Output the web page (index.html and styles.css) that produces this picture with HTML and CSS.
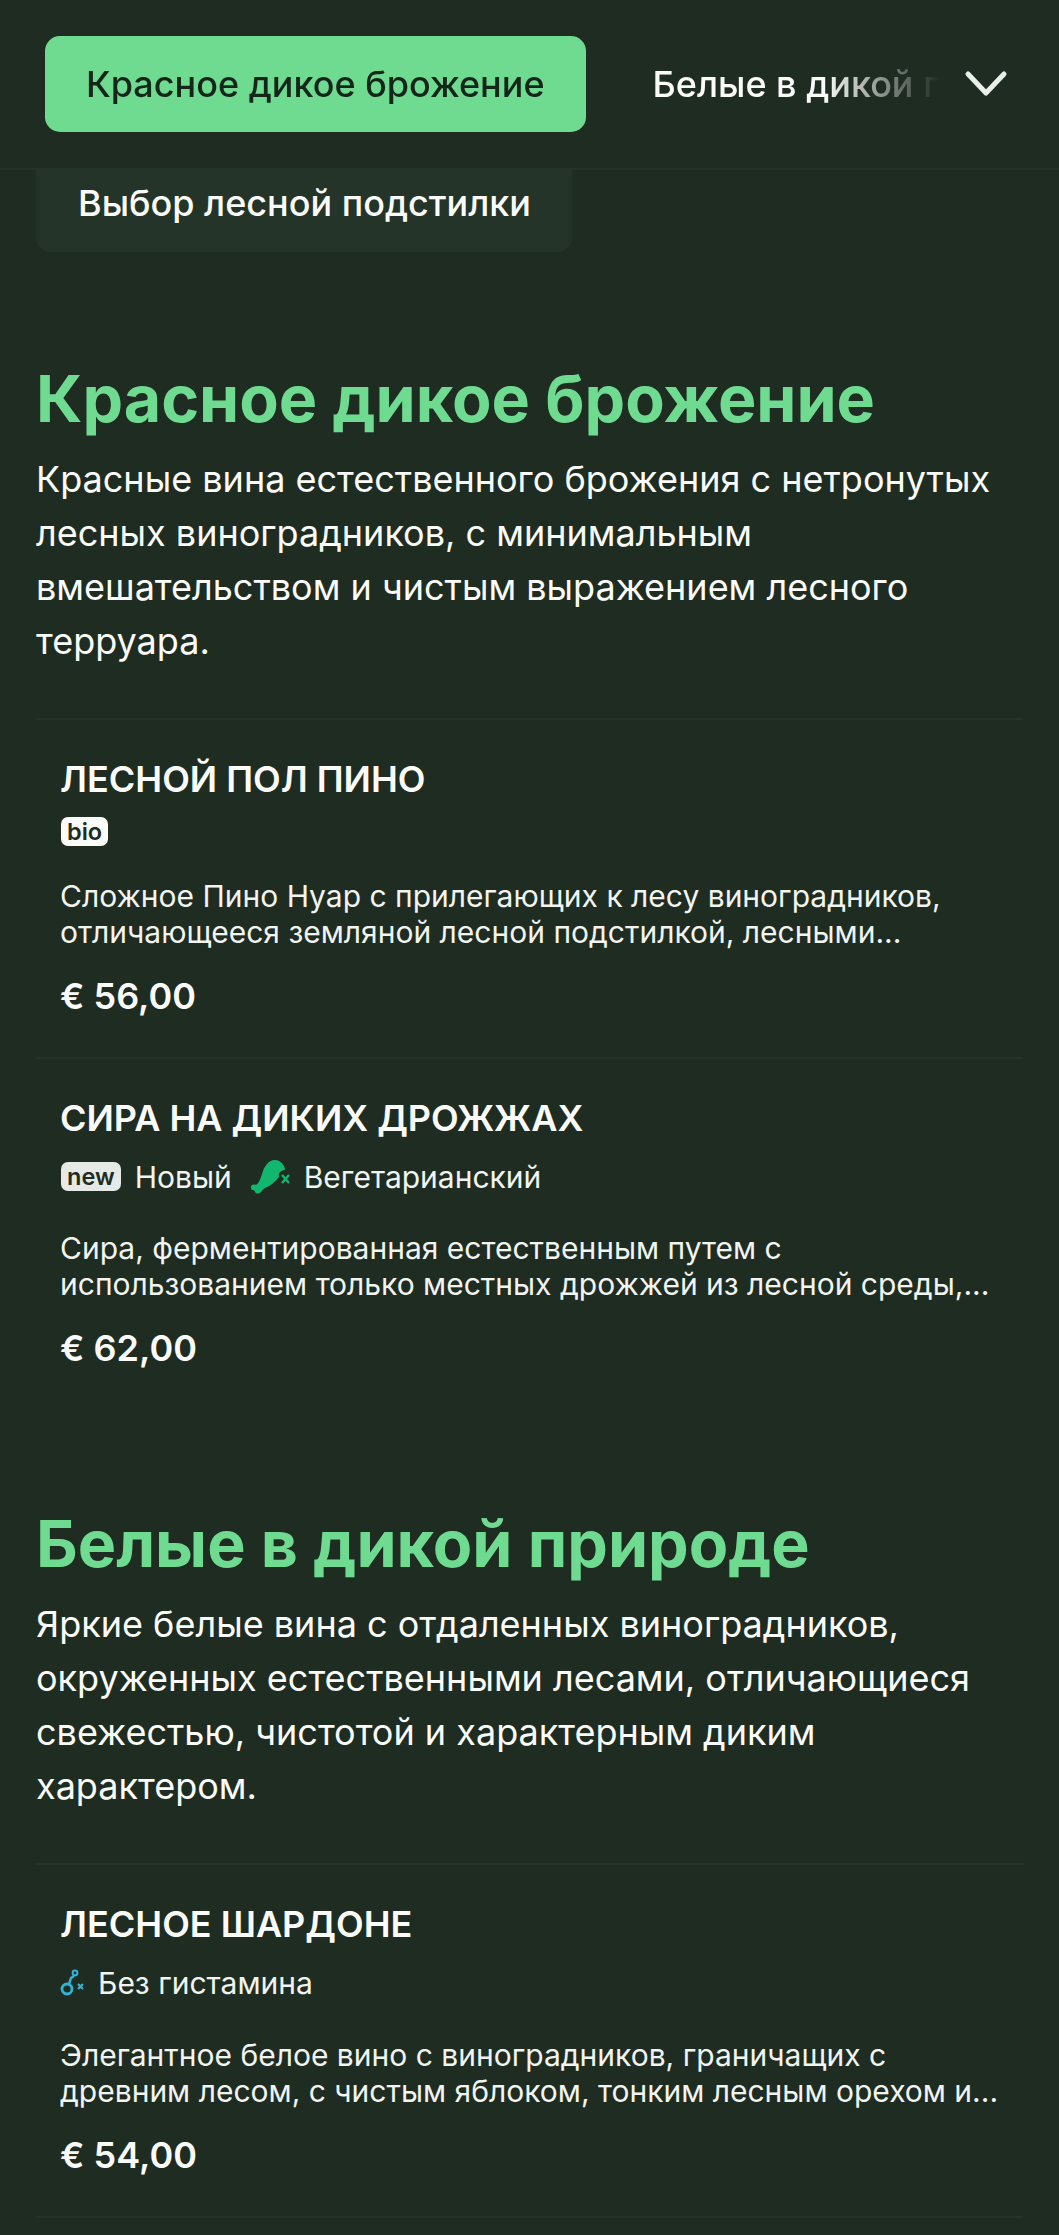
FILE: index.html
```html
<!DOCTYPE html>
<html lang="ru">
<head>
  <meta charset="UTF-8">
  <title>Меню</title>
  <link rel="stylesheet" href="styles.css">
</head>
<body>

  <header class="topbar">
    <nav class="tabs">
      <a class="tab tab-active">Красное дикое брожение</a>
      <a class="tab">Белые в дикой природе</a>
    </nav>
    <button class="tabs-toggle" aria-label="Все категории">
      <svg viewBox="0 0 44 28" width="44" height="28"><path d="M4 4 L22 23 L40 4" fill="none" stroke="#e9efe9" stroke-width="5" stroke-linecap="round" stroke-linejoin="round"/></svg>
    </button>
  </header>

  <main class="menu">
    <div class="prev-tab">Выбор лесной подстилки</div>

    <section class="category">
      <h2>Красное дикое брожение</h2>
      <p class="category-text">Красные вина естественного брожения с нетронутых лесных виноградников, с минимальным вмешательством и чистым выражением лесного терруара.</p>

      <article class="item">
        <h3>ЛЕСНОЙ ПОЛ ПИНО</h3>
        <div class="tags">
          <span class="badge">bio</span>
        </div>
        <p class="item-text">Сложное Пино Нуар с прилегающих к лесу виноградников, отличающееся земляной лесной подстилкой, лесными...</p>
        <div class="price">€ 56,00</div>
      </article>

      <article class="item">
        <h3>СИРА НА ДИКИХ ДРОЖЖАХ</h3>
        <div class="tags">
          <span class="badge badge-soft">new</span>
          <span class="tag-label">Новый</span>
          <svg class="tag-icon icon-veg" viewBox="0 0 40 35" width="40" height="35">
            <path d="M1 28 C1 26 3 25 6 26 C9 24 10 21 12 15 C14 8 18 1 25 1 C30 1 35 6 35 11 C31 11 28 14 29 18 C25 23 20 27 15 29 C13 30 12 32 11 33 C9 35 6 35 5 33 C5 32 4 31 3 31 C1 31 1 30 1 28 Z" fill="#12b76f"/>
            <path d="M32 16 L39 24 M39 16 L32 24" stroke="#12b76f" stroke-width="2.4" fill="none"/>
          </svg>
          <span class="tag-label">Вегетарианский</span>
        </div>
        <p class="item-text">Сира, ферментированная естественным путем с использованием только местных дрожжей из лесной среды,...</p>
        <div class="price">€ 62,00</div>
      </article>
    </section>

    <section class="category">
      <h2>Белые в дикой природе</h2>
      <p class="category-text">Яркие белые вина с отдаленных виноградников, окруженных естественными лесами, отличающиеся свежестью, чистотой и характерным диким характером.</p>

      <article class="item">
        <h3>ЛЕСНОЕ ШАРДОНЕ</h3>
        <div class="tags">
          <svg class="tag-icon icon-hist" viewBox="0 0 24 28" width="24" height="28">
            <circle cx="7" cy="20" r="5" fill="none" stroke="#2fb4d8" stroke-width="2.8"/>
            <path d="M9 15 L11 9 L14 7" fill="none" stroke="#2fb4d8" stroke-width="2.4"/>
            <circle cx="15" cy="4" r="2.4" fill="none" stroke="#2fb4d8" stroke-width="2"/>
            <path d="M18 15 L23 20 M23 15 L18 20" stroke="#2fb4d8" stroke-width="2.2" fill="none"/>
          </svg>
          <span class="tag-label">Без гистамина</span>
        </div>
        <p class="item-text">Элегантное белое вино с виноградников, граничащих с древним лесом, с чистым яблоком, тонким лесным орехом и...</p>
        <div class="price">€ 54,00</div>
      </article>
    </section>
  </main>

</body>
</html>
```

FILE: styles.css
```css
* {
  box-sizing: border-box;
}

html, body {
  margin: 0;
  height: 2235px;
  overflow: hidden;
}

body {
  font-family: Inter, "Noto Sans", sans-serif;
  background-color: #1f2c22;
  color: #fbfcfa;
}

.topbar {
  display: flex;
  align-items: center;
  height: 170px;
  padding: 0 51px 0 45px;
  border-bottom: 2px solid #263329;
}

.tabs {
  flex: 1;
  display: flex;
  align-items: center;
  overflow: hidden;
  white-space: nowrap;
  -webkit-mask-image: linear-gradient(to right, #000 780px, transparent 895px);
  mask-image: linear-gradient(to right, #000 780px, transparent 895px);
}

.tab {
  flex: none;
  font-size: 36px;
  font-weight: 500;
  line-height: 96px;
  padding: 0 41px;
}

.tab-active {
  background-color: #6edb91;
  color: #14251a;
  border-radius: 15px;
}

.tab:not(.tab-active) {
  padding-left: 67px;
}

.tabs-toggle {
  flex: none;
  display: flex;
  padding: 0;
  margin-left: 20px;
  border: none;
  background: none;
}

.menu {
  padding: 0 36px;
}

.prev-tab {
  width: 536px;
  height: 82px;
  padding: 13px 0 0 42px;
  font-size: 36px;
  font-weight: 500;
  line-height: 40px;
  white-space: nowrap;
  background-color: #243429;
  border-radius: 0 0 15px 15px;
}

.category {
  margin-bottom: 99px;
}

.category:first-of-type {
  margin-top: 111px;
}

.category:last-of-type {
  margin-bottom: 0;
  border-bottom: 2px solid #263329;
}

h2 {
  margin: 0;
  font-size: 64.5px;
  font-weight: 700;
  line-height: 72px;
  color: #6edb91;
}

.category-text {
  margin: 17px 0 50px;
  font-size: 36px;
  line-height: 54px;
}

.item {
  padding: 34px 24px 38px;
  border-top: 2px solid #263329;
}

h3 {
  margin: 0;
  font-size: 36px;
  font-weight: 600;
  line-height: 50px;
}

.tags {
  display: flex;
  align-items: center;
  min-height: 38px;
  margin-top: 8px;
  gap: 14px;
}

.badge {
  padding: 0 6px;
  margin-left: 1px;
  font-size: 23.5px;
  font-weight: 600;
  line-height: 29px;
  color: #1f2c22;
  background-color: #fbfcfa;
  border-radius: 7px;
}

.badge-soft {
  background-color: #e6eae6;
}

.tag-label {
  font-size: 30px;
  color: #f1f4f0;
}

.tag-icon {
  flex: none;
  margin: 8px 0;
}

.icon-veg {
  margin-left: 4px;
  margin-right: 0;
}

.icon-hist {
  margin-top: 12px;
  margin-bottom: 12px;
}

.item-text {
  margin: 28px 0 0;
  font-size: 30px;
  line-height: 36px;
  color: #f1f4f0;
}

.price {
  margin-top: 23px;
  font-size: 36px;
  font-weight: 600;
  line-height: 46px;
}
```
